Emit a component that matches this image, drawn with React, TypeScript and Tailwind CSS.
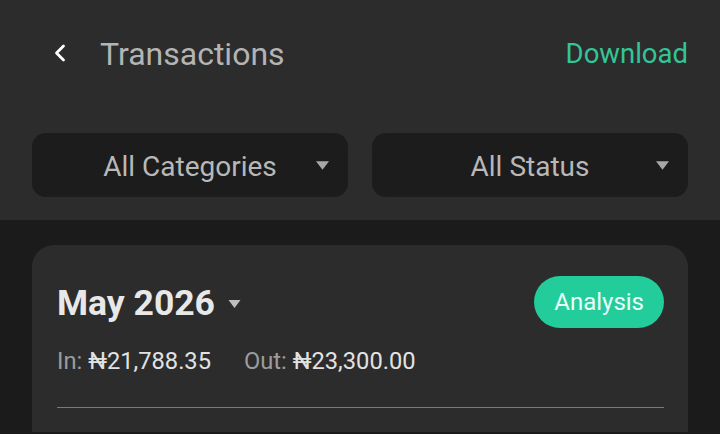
import { ChevronLeft } from 'lucide-react';

function Caret({ className }: { className?: string }) {
  return (
    <svg viewBox="0 0 12 8" className={className} fill="currentColor">
      <path d="M0 0 H12 L6 8 Z" />
    </svg>
  );
}

function FilterSelect({ label }: { label: string }) {
  return (
    <div className="relative flex h-16 flex-1 items-center justify-center rounded-[14px] bg-[#1c1c1c] pt-[3px]">
      <span className="text-[28px] text-[#b8b8b8]">{label}</span>
      <Caret className="absolute right-[19px] top-[28px] h-[9px] w-[13px] text-[#a8a8a8]" />
    </div>
  );
}

export default function App() {
  return (
    <div className="min-h-[434px] w-[720px] bg-[#1b1b1b] font-['Roboto','Noto_Sans',sans-serif]">
      {/* Header */}
      <div className="bg-[#2c2c2c] pb-[23px]">
        <div className="flex h-[106px] items-center px-8">
          <ChevronLeft className="ml-[14px] h-7 w-7 text-white" strokeWidth={2.4} />
          <h1 className="ml-[26px] pt-[2px] text-[32px] text-[#b4b4b4]">Transactions</h1>
          <span className="ml-auto pt-[2px] text-[27.5px] text-[#33c598]">Download</span>
        </div>
        <div className="mt-[27px] flex gap-6 px-8">
          <FilterSelect label="All Categories" />
          <FilterSelect label="All Status" />
        </div>
      </div>

      {/* Month card */}
      <div className="mx-8 mt-[25px] rounded-t-[22px] bg-[#2c2c2c] pb-6 pl-[25px] pr-6 pt-[31px]">
        <div className="flex h-[52px] items-center">
          <span className="pt-[3px] text-[35.5px] font-bold text-[#e8e8e8]">May 2026</span>
          <Caret className="ml-[12px] mt-[3px] h-[8px] w-[15px] text-[#bdbdbd]" />
          <button className="ml-auto h-[52px] rounded-full bg-[#22cd9b] px-5 text-[24px] text-[#eafff8]">
            Analysis
          </button>
        </div>
        <div className="mt-[16px] flex gap-[33px] text-[23.7px]">
          <span>
            <span className="text-[#9c9c9c]">In: </span>
            <span className="text-[#e2e2e2]">₦21,788.35</span>
          </span>
          <span>
            <span className="text-[#9c9c9c]">Out: </span>
            <span className="text-[#e2e2e2]">₦23,300.00</span>
          </span>
        </div>
        <div className="mt-[27px] h-px bg-[#7a7a7a]" />
      </div>
    </div>
  );
}
